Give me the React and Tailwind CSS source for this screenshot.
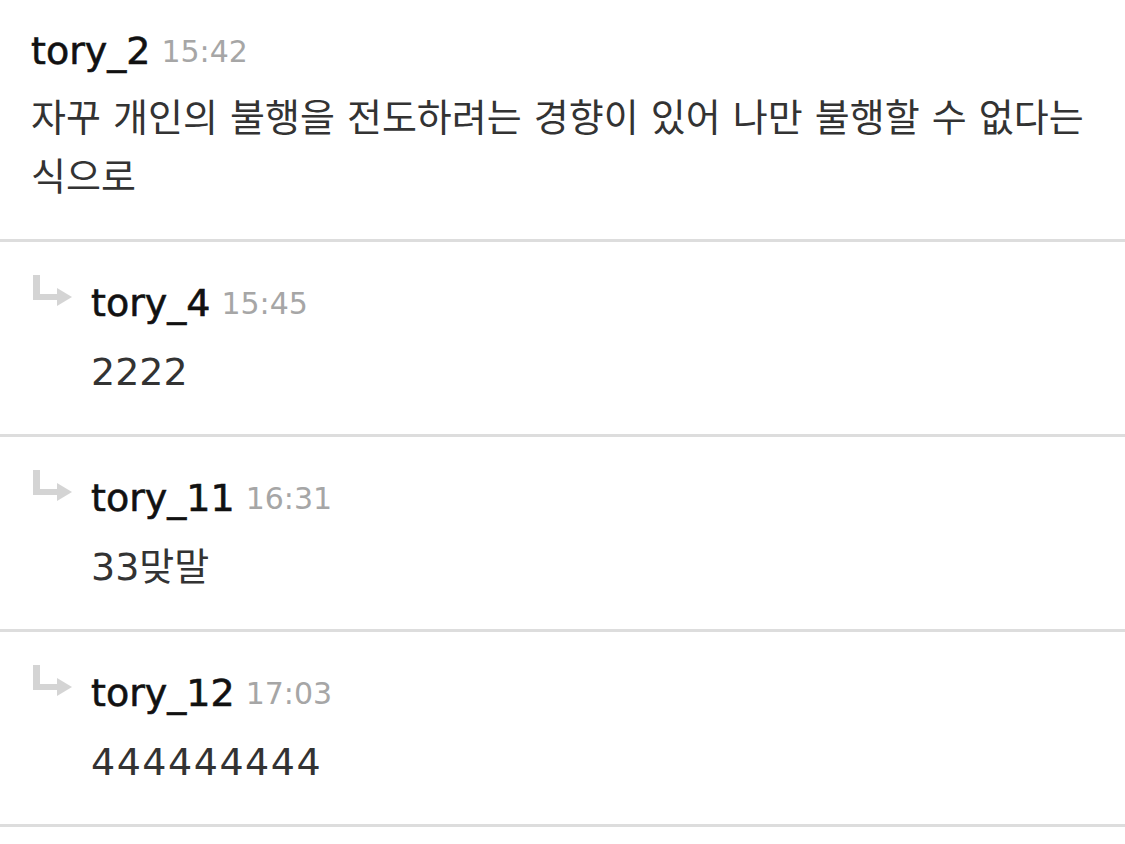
import React from "react";

const FONT = { fontFamily: '"DejaVu Sans", "Noto Sans CJK KR", sans-serif' };

function Arrow() {
  return (
    <svg width="40" height="33" viewBox="0 0 40 33" className="shrink-0">
      <rect x="0" y="0" width="7" height="25" fill="#d4d4d4" />
      <rect x="0" y="19" width="25" height="6" fill="#d4d4d4" />
      <path d="M24 13 L39 22 L24 31 Z" fill="#d4d4d4" />
    </svg>
  );
}

function Header({ name, time }) {
  return (
    <div className="flex items-center h-[48px] gap-[11px]">
      <span className="text-[38px] leading-none text-[#111] [-webkit-text-stroke:0.6px_#111]">{name}</span>
      <span className="text-[30px] leading-none text-[#a6a6a6] mt-[2px]">{time}</span>
    </div>
  );
}

function Reply({ name, time, text, wide }) {
  return (
    <div className="pt-[37px] pb-[32px] pl-[33px] pr-[31px] border-b-[3px] border-[#dddddd]">
      <div className="flex">
        <div className="w-[58px] shrink-0">
          <div className="-mt-[4px]">
            <Arrow />
          </div>
        </div>
        <div className="flex flex-col">
          <Header name={name} time={time} />
          <div className={wide ? "mt-[16px] text-[38px] leading-[59px] text-[#333] tracking-[1.5px]" : "mt-[16px] text-[38px] leading-[59px] text-[#333]"}>{text}</div>
        </div>
      </div>
    </div>
  );
}

export default function App() {
  return (
    <div className="w-[1125px] min-h-[844px] bg-white" style={FONT}>
      <div className="pt-[27px] pb-[32px] pl-[31px] pr-[31px] border-b-[3px] border-[#dddddd]">
        <Header name="tory_2" time="15:42" />
        <div className="mt-[14px] text-[38px] leading-[59px] text-[#333]">
          자꾸 개인의 불행을 전도하려는 경향이 있어 나만 불행할 수 없다는 식으로
        </div>
      </div>
      <Reply name="tory_4" time="15:45" text="2222" />
      <Reply name="tory_11" time="16:31" text="33맞말" />
      <Reply name="tory_12" time="17:03" text="444444444" wide />
    </div>
  );
}
